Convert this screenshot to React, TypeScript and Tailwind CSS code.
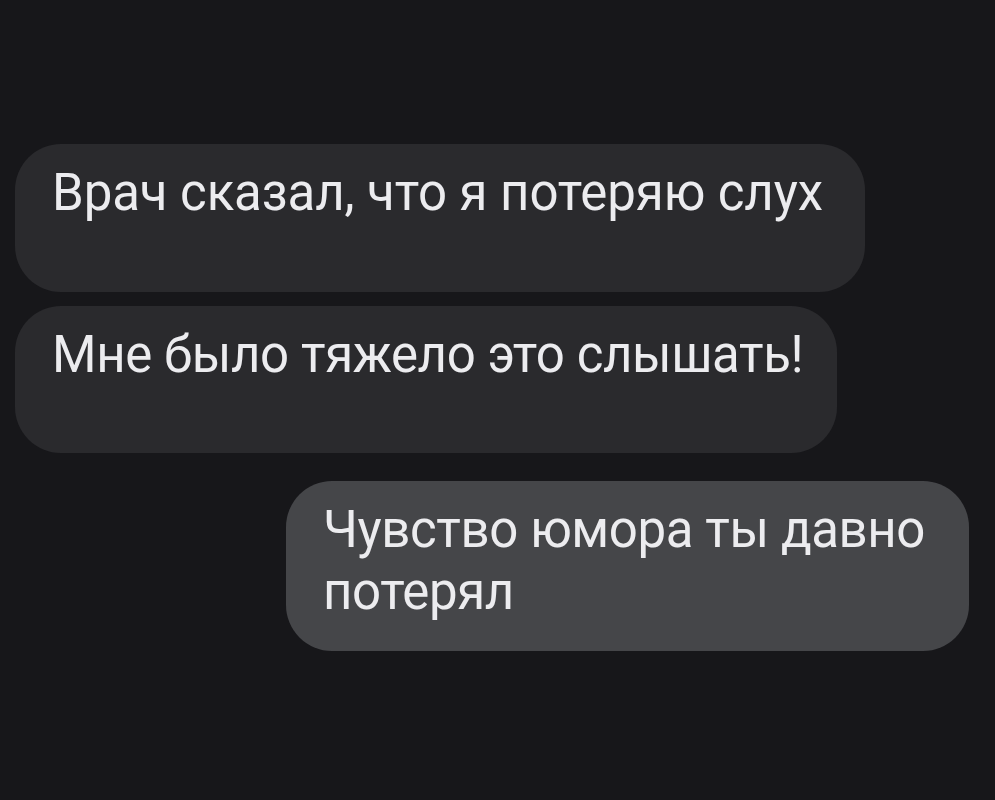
export default function App() {
  return (
    <div
      className="min-h-[800px] w-full bg-[#17171a] pt-[144px] pl-[15px] pr-[26px]"
      style={{ fontFamily: "Roboto, 'Noto Sans', sans-serif" }}
    >
      <div className="flex flex-col gap-[14px]">
        <div className="w-[850px] self-start rounded-[46px] bg-[#2a2a2d] pl-[37px] pr-[20px] pt-[18px] pb-[68px] text-[51px] leading-[62px] tracking-[-0.1px] text-[#ececef] whitespace-nowrap">
          Врач сказал, что я потеряю слух
        </div>
        <div className="w-[822px] self-start rounded-[46px] bg-[#2a2a2d] pl-[37px] pr-[10px] pt-[18px] pb-[67px] text-[51px] leading-[62px] tracking-[-0.4px] text-[#ececef] whitespace-nowrap">
          Мне было тяжело это слышать!
        </div>
        <div className="mt-[14px] w-[683px] self-end rounded-[46px] bg-[#454649] pl-[37px] pr-[24px] pt-[18px] pb-[28px] text-[51px] leading-[62px] tracking-[-0.4px] text-[#ececef]">
          Чувство юмора ты давно потерял
        </div>
      </div>
    </div>
  );
}
